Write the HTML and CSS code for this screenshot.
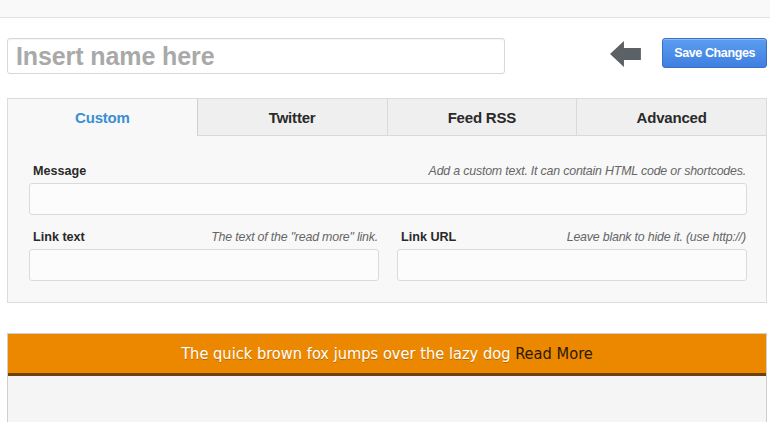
FILE: index.html
```html
<!DOCTYPE html>
<html>
<head>
<meta charset="utf-8">
<link rel="stylesheet" href="styles.css">
</head>
<body>
<div class="topbar"></div>
<div class="header">
  <input class="name-input" type="text" placeholder="Insert name here">
  <svg class="arrow" width="32" height="28" viewBox="0 0 32 28"><path d="M0 14 L14 1 L14 8 L31 8 L31 20 L14 20 L14 27 Z" fill="#5c6166"/></svg>
  <button class="save-btn">Save Changes</button>
</div>
<div class="panel">
  <div class="tabs">
    <div class="tab active">Custom</div>
    <div class="tab">Twitter</div>
    <div class="tab">Feed RSS</div>
    <div class="tab">Advanced</div>
  </div>
  <div class="panel-body">
    <div class="field">
      <div class="field-head"><span class="label">Message</span><span class="hint">Add a custom text. It can contain HTML code or shortcodes.</span></div>
      <input class="text-input" type="text">
    </div>
    <div class="row">
      <div class="field">
        <div class="field-head"><span class="label">Link text</span><span class="hint">The text of the "read more" link.</span></div>
        <input class="text-input" type="text">
      </div>
      <div class="field">
        <div class="field-head"><span class="label">Link URL</span><span class="hint">Leave blank to hide it. (use http://)</span></div>
        <input class="text-input" type="text">
      </div>
    </div>
  </div>
</div>
<div class="preview">
  <div class="bar">The quick brown fox jumps over the lazy dog <a class="more">Read More</a></div>
  <div class="preview-body"></div>
</div>
</body>
</html>
```
FILE: styles.css
```css
html, body { margin: 0; padding: 0; background: #fff; }
body { font-family: "Liberation Sans", Arial, sans-serif; width: 770px; height: 422px; overflow: hidden; }
.topbar { height: 17px; background: #f9f9f9; border-bottom: 1px solid #e3e3e3; }
.header { display: flex; align-items: flex-start; padding: 20px 3px 0 7px; }
.name-input {
  box-sizing: border-box; width: 500px; height: 36px; margin: 0;
  border: 1px solid #d8d8d8; border-radius: 3px; background: #fff;
  padding: 0 8px; font-family: "Liberation Sans", Arial, sans-serif;
  font-weight: bold; font-size: 25px; letter-spacing: -0.1px; color: #333;
  box-shadow: inset 0 1px 1px rgba(0,0,0,0.04);
}
.name-input::placeholder { color: #a9a9a9; }
.arrow { margin: 2px 0 0 105px; display: block; }
.save-btn {
  margin: 0 0 0 20px; box-sizing: border-box; width: 105px; height: 30px;
  border: 1px solid #3a6fc4; border-radius: 3px;
  background: linear-gradient(#5b9df0, #3f7fe0);
  color: #fff; font-family: "Liberation Sans", Arial, sans-serif;
  font-weight: bold; font-size: 12.5px; letter-spacing: -0.4px; padding: 0;
  box-shadow: inset 0 1px 0 rgba(255,255,255,0.3);
}
.panel {
  margin: 24px 3px 0 7px; border: 1px solid #dcdcdc; background: #f8f8f8;
}
.tabs { display: flex; height: 37px; }
.tab {
  flex: 1; display: flex; align-items: center; justify-content: center;
  background: #efefef; border-left: 1px solid #d9d9d9; border-bottom: 1px solid #d9d9d9;
  font-weight: bold; font-size: 15px; color: #2a2a2a; letter-spacing: -0.2px;
}
.tab.active { background: #f8f8f8; border-left: none; border-bottom-color: transparent; color: #3a8fd2; }
.tab:nth-child(2) { border-left-color: #d0d0d0; }
.panel-body { padding: 26px 19px 21px 21px; display: flex; flex-direction: column; gap: 13px; }
.row { display: flex; gap: 18px; }
.row .field { flex: 1; }
.field-head { display: flex; justify-content: space-between; align-items: baseline; padding: 2px 1px 0 4px; height: 15px; margin-bottom: 4px; }
.label { font-weight: bold; font-size: 12.6px; color: #2a2a2a; }
.hint { font-style: italic; font-size: 12.4px; color: #666; letter-spacing: -0.2px; }
.text-input {
  display: block; box-sizing: border-box; width: 100%; height: 32px; margin: 0;
  border: 1px solid #dadada; border-radius: 3px; background: #fcfcfc;
}
.preview { margin: 30px 3px 0 7px; border: 1px solid #cfcfcf; border-bottom: none; }
.bar {
  background: #ec8800; border-bottom: 3px solid #6e4206; height: 39px;
  display: flex; align-items: center; justify-content: center;
  font-family: "DejaVu Sans Condensed", "DejaVu Sans", sans-serif; font-size: 16.3px; color: #fff;
  text-shadow: 0 1px 0 rgba(0,0,0,0.25);
  white-space: pre;
}
.more { color: #2a1a04; text-shadow: none; }
.preview-body { height: 60px; background: #f5f5f5; }
```
